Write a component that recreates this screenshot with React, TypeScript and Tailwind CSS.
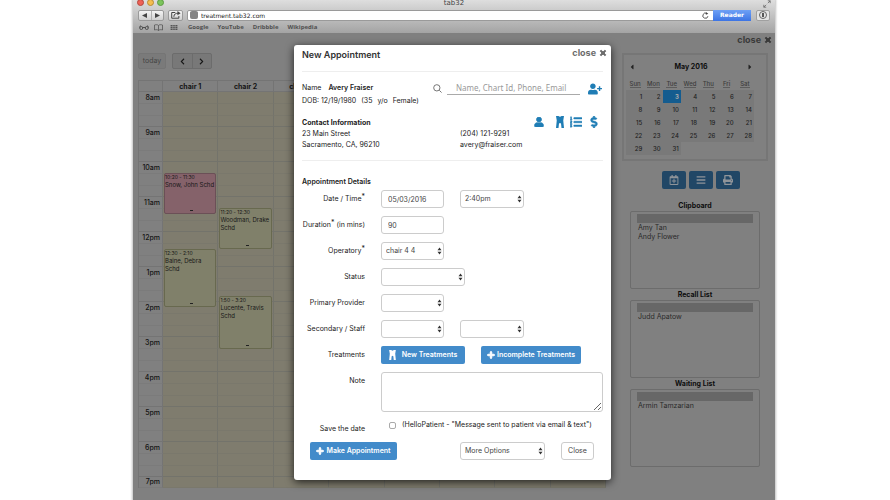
import React from "react";
import {
  FaBars,
  FaChevronLeft,
  FaChevronRight,
  FaDollarSign,
  FaListOl,
  FaPlus,
  FaPrint,
  FaRegCalendarPlus,
  FaTimes,
  FaUser,
  FaUserPlus,
  FaCaretLeft,
  FaCaretRight,
} from "react-icons/fa";

const PX_PER_MINUTE = 35 / 60;

type Appointment = {
  chair: number;
  start: number;
  end: number;
  time: string;
  lines: string[];
  tone: string;
};

const appointments: Appointment[] = [
  { chair: 1, start: 140, end: 210, time: "10:20 - 11:30", lines: ["Snow, John Schd"], tone: "bg-[#85626a] border-[#6b5057]" },
  { chair: 2, start: 200, end: 270, time: "11:20 - 12:30", lines: ["Woodman, Drake", "Schd"], tone: "bg-[#80806a] border-[#68694f]" },
  { chair: 1, start: 270, end: 370, time: "12:30 - 2:10", lines: ["Baine, Debra", "Schd"], tone: "bg-[#80806a] border-[#68694f]" },
  { chair: 2, start: 350, end: 440, time: "1:50 - 3:20", lines: ["Lucente, Travis", "Schd"], tone: "bg-[#80806a] border-[#68694f]" },
];

const hours = ["8am", "9am", "10am", "11am", "12pm", "1pm", "2pm", "3pm", "4pm", "5pm", "6pm", "7pm"];
const chairs = [1, 2, 3, 4, 5, 6, 7, 8];

function Tooth({ className }: { className: string }) {
  return (
    <svg viewBox="0 0 16 24" fill="currentColor" className={className} aria-hidden="true">
      <path d="M0 0h5q3 3 6 0h5l-1.500 9L16 24h-5l-1-9q-2-2-4 0l-1 9H0L1.500 9z" />
    </svg>
  );
}

function BrowserChrome() {
  return (
    <header className="h-[33px] bg-linear-to-b from-[#dedede] to-[#a4a4a4] font-['DejaVu_Sans',sans-serif]">
      <div className="flex h-[9px] items-start px-1">
        <div className="flex w-16 gap-[3px] overflow-hidden">
          <span className="-mt-px size-[7px] rounded-full border border-[#b5463c] bg-[#ee6156]" />
          <span className="-mt-px size-[7px] rounded-full border border-[#b98a32] bg-[#f4bd4f]" />
          <span className="-mt-px size-[7px] rounded-full border border-[#5d9a43] bg-[#7cc45c]" />
        </div>
        <h1 className="flex-1 text-center text-[7px] leading-[6px] text-[#444]">tab32</h1>
        <svg viewBox="0 0 10 10" className="ml-14 size-2 text-[#666]" fill="none" stroke="currentColor" aria-hidden="true">
          <path d="M6 4l3-3M6 1h3v3M4 6L1 9M1 6v3h3" />
        </svg>
      </div>
      <div className="flex h-3 items-center pr-[5px] pl-[5px]">
        <div className="flex h-[11px] w-[26px] rounded-xs border border-[#9a9a9a] bg-linear-to-b from-[#f4f4f4] to-[#d0d0d0] text-[#444]">
          <button aria-label="Back" className="flex flex-1 items-center justify-center border-r border-[#b0b0b0]">
            <svg viewBox="0 0 6 6" className="size-[5px]" fill="currentColor"><path d="M6 0v6L0 3z" /></svg>
          </button>
          <button aria-label="Forward" className="flex flex-1 items-center justify-center">
            <svg viewBox="0 0 6 6" className="size-[5px]" fill="currentColor"><path d="M0 0v6l6-3z" /></svg>
          </button>
        </div>
        <button aria-label="Share" className="ml-1 flex h-[11px] w-[15px] items-center justify-center rounded-xs border border-[#9a9a9a] bg-linear-to-b from-[#f4f4f4] to-[#d0d0d0] text-[#444]">
          <svg viewBox="0 0 14 11" className="h-2 w-2.5" fill="none" stroke="currentColor" strokeWidth="1.4">
            <path d="M6 2H1v8h10V7M4 8c0-4 3-5 6-5" />
            <path d="M9 0l4.500 3L9 6z" fill="currentColor" stroke="none" />
          </svg>
        </button>
        <div className="ml-1 flex h-[11px] flex-1 items-center rounded-xs border border-[#9a9a9a] bg-white pl-0.5">
          <span className="size-2 rounded-xs bg-[#858585]" />
          <input aria-label="Address" defaultValue="treatment.tab32.com" className="ml-[3px] h-2 min-w-0 flex-1 bg-transparent text-[6px] leading-[7px] text-[#222] outline-none" />
          <button aria-label="Reload" className="mr-1 text-[#444]">
            <svg viewBox="0 0 10 10" className="size-[7px]" fill="none" stroke="currentColor" strokeWidth="1.300">
              <path d="M8.500 6A3.700 3.700 0 1 1 7 2.200" />
              <path d="M5.500 0l3.500 2.500-3.500 1.500z" fill="currentColor" stroke="none" />
            </svg>
          </button>
          <button className="-mr-px h-[11px] w-[38px] bg-linear-to-b from-[#6ea0f5] to-[#3c74e4] text-center text-[6px] leading-[10px] font-bold text-white">Reader</button>
        </div>
        <button aria-label="Downloads" className="ml-[5px] flex h-[11px] w-[14px] items-center justify-center rounded-xs border border-[#a0a0a0] bg-[#e4e4e4]">
          <span className="flex size-2 items-center justify-center rounded-full border border-[#666]">
            <span className="h-1 w-0.5 bg-[#555]" />
          </span>
        </button>
      </div>
      <nav className="flex h-3 items-center pl-1.5 font-['Open_Sans',sans-serif] text-[6px] font-bold text-[#505050]">
        <svg viewBox="0 0 20 10" className="h-[5px] w-2.5" fill="none" stroke="currentColor" strokeWidth="2" aria-hidden="true">
          <circle cx="4.500" cy="6" r="3" /><circle cx="15.500" cy="6" r="3" /><path d="M7.500 5h5M1 5L3 1M19 5l-2-4" />
        </svg>
        <svg viewBox="0 0 18 14" className="ml-[5px] h-[7px] w-[9px]" fill="none" stroke="currentColor" strokeWidth="1.500" aria-hidden="true">
          <path d="M9 3C7 1 4 1 1 2v10c3-1 6-1 8 1 2-2 5-2 8-1V2C14 1 11 1 9 3zM9 3v10" />
        </svg>
        <svg viewBox="0 0 15 11" className="ml-[7px] h-[5px] w-2" fill="currentColor" aria-hidden="true">
          {[0, 4, 8].map((y) => [0, 4, 8, 12].map((x) => <rect key={`${x}-${y}`} x={x} y={y} width="3" height="3" />))}
        </svg>
        <div className="ml-2.5 flex gap-[9px]">
          <a href="#google">Google</a>
          <a href="#youtube">YouTube</a>
          <a href="#dribbble">Dribbble</a>
          <a href="#wikipedia">Wikipedia</a>
        </div>
      </nav>
    </header>
  );
}

function Schedule() {
  return (
    <section className="min-w-0 flex-1 pt-5">
      <div className="flex gap-1.5">
        <button className="h-4 w-7 rounded-xs border border-[#757575] bg-[#7a7a7a] text-[7px] leading-3 text-[#454545]">today</button>
        <div className="flex h-4 w-10 rounded-xs border border-[#6c6c6c] bg-[#787878] text-[#151515]">
          <button aria-label="Previous day" className="flex flex-1 items-center justify-center border-r border-[#6c6c6c]"><FaChevronLeft className="size-[7px]" /></button>
          <button aria-label="Next day" className="flex flex-1 items-center justify-center"><FaChevronRight className="size-[7px]" /></button>
        </div>
      </div>
      <table className="mt-[11px] w-full table-fixed border-separate border-spacing-0 border-t border-l border-[#747474] text-[#141414]">
        <thead>
          <tr className="text-[7px] leading-[9px]">
            <th className="w-6 border-r border-b border-[#747474] p-0" />
            {chairs.map((chair) => (
              <th key={chair} className="h-[11px] border-r border-b border-[#747474] p-0 font-bold">chair {chair}</th>
            ))}
          </tr>
        </thead>
        <tbody>
          {hours.flatMap((hour, h) =>
            [0, 1, 2].slice(0, h === 11 ? 1 : 3).map((slot) => {
              const from = h * 60 + slot * 20;
              return (
                <tr key={from} className={slot === 2 || h === 11 ? "h-[11px]" : "h-3"}>
                  <th scope="row" className={`border-r border-b p-0 pr-0.5 text-right text-[7px] leading-[10px] font-medium ${slot === 2 ? "border-[#747474]" : "border-[#7b7b7b] border-r-[#747474]"}`}>
                    {slot === 0 ? hour : null}
                  </th>
                  {chairs.map((chair) => (
                    <td key={chair} className={`relative border-r border-b bg-[#7f7c6e] p-0 ${slot === 2 ? "border-[#73736b]" : "border-[#7a786c] border-r-[#73736b]"}`}>
                      {appointments
                        .filter((a) => a.chair === chair && a.start >= from && a.start < from + 20)
                        .map((a) => (
                          <article
                            key={a.time}
                            className={`absolute inset-x-px z-10 rounded-xs border text-[#181818] ${a.tone}`}
                            style={{ top: Math.round((a.start - from) * PX_PER_MINUTE) - 1, height: Math.round((a.end - a.start) * PX_PER_MINUTE) }}
                          >
                            <p className="text-[5px] leading-[7px]">{a.time}</p>
                            {a.lines.map((line) => (
                              <p key={line} className="text-[6px] leading-2 whitespace-nowrap">{line}</p>
                            ))}
                            <span className="absolute bottom-0.5 left-1/2 h-px w-[3px] bg-[#222]" />
                          </article>
                        ))}
                    </td>
                  ))}
                </tr>
              );
            })
          )}
        </tbody>
      </table>
    </section>
  );
}

const weeks = [
  [1, 2, 3, 4, 5, 6, 7],
  [8, 9, 10, 11, 12, 13, 14],
  [15, 16, 17, 18, 19, 20, 21],
  [22, 23, 24, 25, 26, 27, 28],
  [29, 30, 31, null, null, null, null],
];

function Month() {
  return (
    <div className="h-[108px] border-2 border-[#767676] pt-[7px] pr-3 pl-0.5 text-[#222]">
      <div className="flex h-[9px] items-center justify-between pl-0.5">
        <button aria-label="Previous month"><FaCaretLeft className="size-2" /></button>
        <h2 className="text-[7px] leading-[9px] font-bold text-[#0d0d0d]">May 2016</h2>
        <button aria-label="Next month"><FaCaretRight className="size-2" /></button>
      </div>
      <table className="mt-1.5 w-full table-fixed border-separate border-spacing-0 text-right text-[6px] leading-[9px]">
        <thead>
          <tr className="text-center text-[#3c3c3c]">
            {["Sun", "Mon", "Tue", "Wed", "Thu", "Fri", "Sat"].map((day) => (
              <th key={day} className="h-[13px] p-0 pb-px font-medium"><span className="border-b border-[#5c5c5c]">{day}</span></th>
            ))}
          </tr>
        </thead>
        <tbody className="font-medium">
          {weeks.map((week) => (
            <tr key={week[0]}>
              {week.map((day, i) => (
                <td key={i} className={day === 3 ? "h-[13px] bg-[#145c8f] p-0 pr-0.5 font-bold text-[#aaa]" : day ? "h-[13px] bg-[#797979] p-0 pr-0.5" : "h-[13px] p-0"}>{day}</td>
              ))}
            </tr>
          ))}
        </tbody>
      </table>
    </div>
  );
}

function PatientList({ title, names }: { title: string; names: string[] }) {
  return (
    <section className="mb-px">
      <h2 className="pt-px text-center text-[7px] leading-2 font-bold text-[#0d0d0d]">{title}</h2>
      <ul className="mt-px h-[78px] rounded-xs border border-[#6c6c6c] px-1.5 pt-0.5 text-[7px] leading-[9px] text-[#2a2a2a]">
        <li className="h-[9px] bg-[#676767]" />
        {names.map((name) => <li key={name} className="pl-px">{name}</li>)}
      </ul>
    </section>
  );
}

function Sidebar() {
  const action = "flex h-[18px] w-6 items-center justify-center rounded-xs bg-[#214766] text-[#8f9499]";
  return (
    <aside className="w-[146px] shrink-0 pt-0.5">
      <div className="-mr-1 flex h-[18px] justify-end">
        <button className="flex h-2.5 items-center gap-[3px] text-[9px] leading-[10px] font-bold text-[#3a3a3a]">close <FaTimes className="size-2 stroke-60" /></button>
      </div>
      <Month />
      <div className="mt-2.5 flex justify-center gap-[3px] pl-3">
        <button aria-label="Add to calendar" className={action}><FaRegCalendarPlus className="size-2.5" /></button>
        <button aria-label="List view" className={action}><FaBars className="size-2.5" /></button>
        <button aria-label="Print" className={action}><FaPrint className="size-2.5" /></button>
      </div>
      <div className="mt-3 px-2">
        <PatientList title="Clipboard" names={["Amy Tan", "Andy Flower"]} />
        <PatientList title="Recall List" names={["Judd Apatow"]} />
        <PatientList title="Waiting List" names={["Armin Tamzarian"]} />
      </div>
    </aside>
  );
}

const fieldBox = "h-[18px] rounded-[3px] border border-[#ccc] bg-white text-[7px] leading-4 text-[#444]";
const primaryButton = "flex h-[18px] items-center justify-center rounded-xs bg-[#428bca] text-[7px] leading-[18px] font-semibold text-white";

function Select({ id, label, value, width }: { id: string; label?: string; value?: string; width: string }) {
  return (
    <div className={`relative ${width}`}>
      <select id={id} aria-label={label} className={`${fieldBox} block w-full appearance-none pr-2.5 pl-1`}>
        <option>{value ?? ""}</option>
      </select>
      <svg viewBox="0 0 6 10" className="pointer-events-none absolute top-[5px] right-0.5 h-2 w-[5px] text-[#333]" fill="currentColor" aria-hidden="true">
        <path d="M0.500 4L3 0.500 5.500 4zM0.500 6L3 9.500 5.500 6z" />
      </svg>
    </div>
  );
}

function Row({ id, label, children }: { id?: string; label: React.ReactNode; children: React.ReactNode }) {
  const text = "w-[63px] shrink-0 text-right whitespace-nowrap";
  return (
    <div className="flex h-[26px] items-center gap-4">
      {id ? <label htmlFor={id} className={text}>{label}</label> : <span className={text}>{label}</span>}
      {children}
    </div>
  );
}

const star = <span className="relative -top-0.5">*</span>;

function AppointmentDialog() {
  return (
    <div role="dialog" aria-labelledby="dialog-title" className="w-[317px] rounded-[3px] bg-white px-2 pb-5 text-[7px] text-[#222] shadow-[0_2px_8px_rgba(0,0,0,0.75)]">
      <div className="flex h-[27px] justify-between border-b border-[#eee] pt-1">
        <h2 id="dialog-title" className="text-[9px] leading-3 font-semibold text-[#333]">New Appointment</h2>
        <button className="-mr-1 flex h-2 items-center gap-[3px] text-[9px] leading-2 font-bold text-[#6c6c6c]">close <FaTimes className="size-2 stroke-60" /></button>
      </div>

      <div className="flex pt-[9px]">
        <div className="w-[131px] leading-[13px] whitespace-nowrap">
          <p className="flex gap-[7px]"><span>Name</span><b className="font-semibold">Avery Fraiser</b></p>
          <p className="flex gap-[5px]"><span>DOB: 12/19/1980</span><span>(35</span><span>y/o</span><span>Female)</span></p>
        </div>
        <svg viewBox="0 0 20 20" className="mt-[3px] size-[9px] text-[#666]" fill="none" stroke="currentColor" strokeWidth="2" aria-hidden="true">
          <circle cx="8.500" cy="8.500" r="7" /><path d="M14 14l5 5" />
        </svg>
        <input aria-label="Find patient" placeholder="Name, Chart Id, Phone, Email" className="ml-[5px] h-3.5 w-[133px] border-b border-[#aaa] pl-[9px] font-['Noto_Sans',sans-serif] text-[8px] outline-none placeholder:text-[#999]" />
        <button aria-label="Add patient" className="ml-2 h-4 text-[#1f7db5]"><FaUserPlus className="size-3.5" /></button>
      </div>

      <div className="mt-[9px] flex h-11 leading-[11px]">
        <div className="w-[158px] pt-px">
          <h3 className="font-bold">Contact Information</h3>
          <p>23 Main Street</p>
          <p>Sacramento, CA, 96210</p>
        </div>
        <div className="flex-1">
          <div className="flex h-3 items-center justify-end pr-[3px] text-[#1f7db5]">
            <button aria-label="Patient profile"><FaUser className="size-2.5 stroke-40" /></button>
            <button aria-label="Dental chart" className="ml-3"><Tooth className="h-3 w-2" /></button>
            <button aria-label="Treatment list" className="ml-1.5"><FaListOl className="size-3 stroke-20" /></button>
            <button aria-label="Billing" className="ml-1.5"><FaDollarSign className="size-3 stroke-20" /></button>
          </div>
          <p>(204) 121-9291</p>
          <p>avery@fraiser.com</p>
        </div>
      </div>

      <form className="border-t border-[#eee] pt-4" onSubmit={(e) => e.preventDefault()}>
        <h3 className="leading-[9px] font-semibold">Appointment Details</h3>
        <Row id="date" label={<>Date / Time{star}</>}>
          <input id="date" defaultValue="05/03/2016" className={`${fieldBox} w-[63px] px-1.5`} />
          <Select id="time" label="Time" value="2:40pm" width="w-16" />
        </Row>
        <Row id="duration" label={<>Duration{star} (in mins)</>}>
          <input id="duration" defaultValue="90" className={`${fieldBox} w-[63px] px-1.5`} />
        </Row>
        <Row id="operatory" label={<>Operatory{star}</>}><Select id="operatory" value="chair 4 4" width="w-[63px]" /></Row>
        <Row id="status" label="Status"><Select id="status" width="w-[84px]" /></Row>
        <Row id="provider" label="Primary Provider"><Select id="provider" width="w-[63px]" /></Row>
        <Row id="secondary" label="Secondary / Staff">
          <Select id="secondary" width="w-[63px]" />
          <Select id="staff" label="Staff" width="w-16" />
        </Row>
        <Row label="Treatments">
          <button type="button" className={`${primaryButton} w-[84px] gap-1.5`}><Tooth className="h-2.5 w-[7px]" />New Treatments</button>
          <button type="button" className={`${primaryButton} w-[100px] gap-0.5`}><FaPlus className="size-2 stroke-60" />Incomplete Treatments</button>
        </Row>
        <div className="flex gap-4 pt-1">
          <label htmlFor="note" className="w-[63px] shrink-0 pt-1 text-right leading-[10px]">Note</label>
          <textarea id="note" className="block h-10 min-w-0 flex-1 rounded-[3px] border border-[#ccc]" />
        </div>
        <div className="flex h-[30px] gap-4">
          <span className="w-[63px] shrink-0 pt-3 text-right leading-[10px]">Save the date</span>
          <label className="flex items-start gap-1.5 pt-2 pl-2 leading-[10px] whitespace-nowrap">
            <input type="checkbox" className="mt-0.5 size-[7px] appearance-none rounded-xs border border-[#aaa]" />
            <span>(HelloPatient - "Message sent to patient via email &amp; text")</span>
          </label>
        </div>
        <div className="flex items-center pl-2">
          <button type="submit" className={`${primaryButton} w-[87px] gap-0.5`}><FaPlus className="size-2 stroke-60" />Make Appointment</button>
          <div className="ml-[63px] flex gap-4">
            <Select id="more" label="More options" value="More Options" width="w-[85px]" />
            <button type="button" className={`${fieldBox} w-[33px]`}>Close</button>
          </div>
        </div>
      </form>
    </div>
  );
}

export default function App() {
  return (
    <div className="h-screen overflow-hidden bg-white pr-[115px] pl-[133px] font-[Inter,sans-serif]">
      <div className="relative min-h-full bg-[#808080] shadow-[0_0_2px_1px_rgba(0,0,0,0.25)]">
        <BrowserChrome />
        <main className="flex h-[467px] gap-4 overflow-hidden pr-[7px] pl-[5px]">
          <Schedule />
          <Sidebar />
        </main>
        <div className="absolute inset-x-0 top-[45px] z-20 flex justify-center pr-[3px]">
          <AppointmentDialog />
        </div>
      </div>
    </div>
  );
}
